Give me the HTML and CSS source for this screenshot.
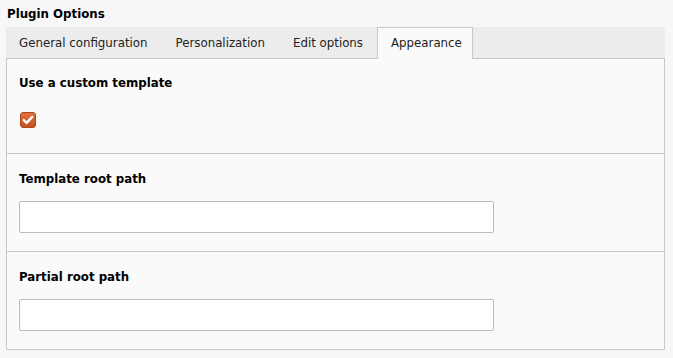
FILE: index.html
```html
<!DOCTYPE html>
<html lang="en">
<head>
<meta charset="utf-8">
<title>Plugin Options</title>
<link rel="stylesheet" href="styles.css">
</head>
<body>
<div class="title">Plugin Options</div>
<div class="tabs">
  <div class="tab">General configuration</div>
  <div class="tab">Personalization</div>
  <div class="tab">Edit options</div>
  <div class="tab active">Appearance</div>
</div>
<div class="panel">
  <div class="section first">
    <div class="label">Use a custom template</div>
    <div class="check">
      <svg width="16" height="16" viewBox="0 0 16 16"><path d="M3.8 8.1 L6.6 10.9 L12.2 4.9" fill="none" stroke="#fff" stroke-width="2.4" stroke-linecap="round" stroke-linejoin="round"/></svg>
    </div>
  </div>
  <div class="section">
    <div class="label">Template root path</div>
    <div class="input"></div>
  </div>
  <div class="section last">
    <div class="label">Partial root path</div>
    <div class="input"></div>
  </div>
</div>
</body>
</html>
```

FILE: styles.css
```css
html, body {
  margin: 0;
  background: #f7f7f7;
}
body {
  padding: 0 8px 0 6px;
  font-family: "DejaVu Sans", Verdana, sans-serif;
  font-size: 11.8px;
  color: #000;
}
.title {
  font-weight: bold;
  line-height: 16px;
  padding-top: 6px;
  height: 21px;
  padding-left: 1px;
}
.tabs {
  display: flex;
  background: #ececec;
  height: 31px;
  position: relative;
  z-index: 1;
}
.tab {
  padding: 0 13px;
  border: 1px solid transparent;
  border-bottom: none;
  line-height: 31px;
  height: 31px;
  box-sizing: border-box;
  color: #222;
}
.tab:first-child {
  padding-left: 12px;
}
.tab.active {
  background: #fafafa;
  border-color: #c8c8c8;
  height: 32px;
  padding-right: 10px;
}
.panel {
  border: 1px solid #c8c8c8;
  background: #fafafa;
}
.section {
  padding: 17px 12px 18px 12px;
  border-bottom: 1px solid #c8c8c8;
}
.section.first {
  padding-top: 16px;
  padding-bottom: 25px;
}
.section.last {
  border-bottom: none;
}
.label {
  font-weight: bold;
  line-height: 16px;
}
.input {
  margin-top: 14px;
  width: 475px;
  height: 32px;
  box-sizing: border-box;
  background: #fff;
  border: 1px solid #bbb;
  border-radius: 2px;
}
.check {
  margin-top: 21px;
  margin-left: 1px;
  width: 16px;
  height: 16px;
  box-sizing: border-box;
  border-radius: 3px;
  background: linear-gradient(#e2733f, #c4511f);
  border: 1px solid #a9461d;
}
.check svg {
  display: block;
  margin: -1px;
}
```
